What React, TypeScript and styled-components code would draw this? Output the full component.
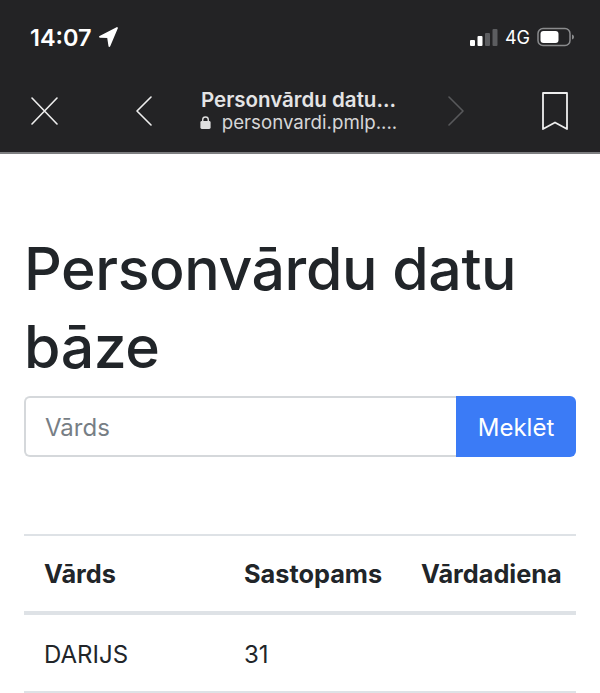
import React from "react";
import styled, { createGlobalStyle } from "styled-components";

const GlobalStyle = createGlobalStyle`
  html, body {
    margin: 0;
    padding: 0;
    height: 693px;
    overflow: hidden;
    background: #fff;
    font-family: Inter, "Liberation Sans", sans-serif;
    color: #212529;
  }
`;

const Page = styled.div`
  width: 600px;
  height: 693px;
  overflow: hidden;
`;

const BrowserBar = styled.header`
  height: 154px;
  box-sizing: border-box;
  background: #232325;
  border-bottom: 2px solid #7d7e80;
  display: flex;
  flex-direction: column;
  color: #fff;
`;

const StatusRow = styled.div`
  height: 74px;
  box-sizing: border-box;
  padding: 0 25px 0 30px;
  display: flex;
  align-items: center;
  justify-content: space-between;
`;

const Clock = styled.div`
  display: flex;
  align-items: center;
  gap: 7px;
  font-size: 23.5px;
  font-weight: 600;
`;

const StatusRight = styled.div`
  display: flex;
  align-items: center;
  gap: 7px;
  font-size: 18px;
  font-weight: 400;
`;

const NavRow = styled.div`
  flex: 1;
  padding: 0 32px 4px 31px;
  display: grid;
  grid-template-columns: 105px 64px 248px 94px 26px;
  align-items: center;
  justify-items: start;
`;

const PageInfo = styled.div`
  width: 197px;
  display: flex;
  flex-direction: column;
  align-items: center;
  line-height: 23px;
`;

const PageTitle = styled.div`
  font-size: 20.5px;
  font-weight: 600;
  color: #e4e4e5;
  white-space: nowrap;
`;

const PageUrl = styled.div`
  display: flex;
  align-items: center;
  gap: 11px;
  font-size: 18.7px;
  color: #d6d6d7;
  white-space: nowrap;
`;

const Content = styled.main`
  padding: 76px 24px 0;
`;

const Heading = styled.h1`
  margin: 0 0 10px;
  font-size: 59px;
  line-height: 78px;
  font-weight: 500;
  letter-spacing: -0.42px;
  color: #212529;
`;

const SearchForm = styled.form`
  display: flex;
  height: 61px;
  margin-bottom: 77px;
`;

const SearchInput = styled.input`
  flex: 1;
  min-width: 0;
  box-sizing: border-box;
  padding: 2px 19px 0;
  border: 2px solid #d5d8db;
  border-right: 0;
  border-radius: 6px 0 0 6px;
  font: 400 24px Inter, "Liberation Sans", sans-serif;
  color: #212529;
  outline: none;

  &::placeholder {
    color: #777e85;
    opacity: 1;
  }
`;

const SearchButton = styled.button`
  width: 120px;
  border: 0;
  border-radius: 0 6px 6px 0;
  background: #3b7bf6;
  color: #fff;
  font: 400 24px Inter, "Liberation Sans", sans-serif;
  padding: 2px 0 0;
`;

const Table = styled.table`
  width: 552px;
  table-layout: fixed;
  border-collapse: collapse;
  font-size: 24px;
`;

const HeadCell = styled.th<{ $width: number }>`
  width: ${(p) => p.$width}px;
  height: 78px;
  box-sizing: border-box;
  padding: 0 0 0 20px;
  text-align: left;
  font-size: 25.3px;
  font-weight: 700;
  white-space: nowrap;
  border-top: 2px solid #dee2e6;
  border-bottom: 4px solid #dee2e6;
`;

const Cell = styled.td`
  height: 79px;
  box-sizing: border-box;
  padding: 2px 0 0 20px;
  font-weight: 400;
  border-bottom: 2px solid #dee2e6;
`;

function LocationArrow() {
  return (
    <svg width="19" height="20" viewBox="0 0 19 20">
      <path d="M18 1 L1 9.8 L9 10.2 L10.4 19 Z" fill="#fff" stroke="#fff" strokeWidth="1.8" strokeLinejoin="round" />
    </svg>
  );
}

function SignalBars() {
  const bars = [
    { x: 0, h: 6, c: "#fff" },
    { x: 7.5, h: 10, c: "#fff" },
    { x: 15, h: 13, c: "#5c5d60" },
    { x: 22.5, h: 17, c: "#5c5d60" },
  ];
  return (
    <svg width="28" height="17" viewBox="0 0 28 17">
      {bars.map((b) => (
        <rect key={b.x} x={b.x} y={17 - b.h} width="5" height={b.h} rx="1" fill={b.c} />
      ))}
    </svg>
  );
}

function Battery() {
  return (
    <svg width="38" height="20" viewBox="0 0 38 20">
      <rect x="1" y="1.5" width="32" height="17" rx="5" fill="none" stroke="#8a8b8d" strokeWidth="1.5" />
      <rect x="3.5" y="4" width="18" height="12" rx="3" fill="#fff" />
      <path d="M35 7.5 C36.5 8 37 9 37 10 C37 11 36.5 12 35 12.5 Z" fill="#8a8b8d" />
    </svg>
  );
}

function CloseIcon() {
  return (
    <svg width="27" height="28" viewBox="0 0 27 28">
      <path d="M1 1 L26 27 M26 1 L1 27" stroke="#eeeeee" strokeWidth="1.6" fill="none" strokeLinecap="round" />
    </svg>
  );
}

function Chevron({ direction, color }: { direction: "left" | "right"; color: string }) {
  const d = direction === "left" ? "M15 1 L1 15 L15 29" : "M1 1 L15 15 L1 29";
  return (
    <svg width="16" height="30" viewBox="0 0 16 30">
      <path d={d} stroke={color} strokeWidth="1.6" fill="none" strokeLinecap="round" strokeLinejoin="round" />
    </svg>
  );
}

function LockIcon() {
  return (
    <svg width="11" height="13" viewBox="0 0 11 14">
      <path d="M2.5 6 V4 a3 3 0 0 1 6 0 V6" fill="none" stroke="#e0e0e0" strokeWidth="1.5" />
      <rect x="0" y="5.5" width="11" height="8.5" rx="1.5" fill="#e0e0e0" />
    </svg>
  );
}

function BookmarkIcon() {
  return (
    <svg width="26" height="38" viewBox="0 0 26 38">
      <path d="M1 1 H25 V37 L13 30.5 L1 37 Z" stroke="#eeeeee" strokeWidth="1.8" fill="none" strokeLinejoin="round" />
    </svg>
  );
}

export default function App() {
  return (
    <Page>
      <GlobalStyle />
      <BrowserBar>
        <StatusRow>
          <Clock>
            14:07
            <LocationArrow />
          </Clock>
          <StatusRight>
            <SignalBars />
            4G
            <Battery />
          </StatusRight>
        </StatusRow>
        <NavRow>
          <CloseIcon />
          <Chevron direction="left" color="#eeeeee" />
          <PageInfo>
            <PageTitle>Personvārdu datu...</PageTitle>
            <PageUrl>
              <LockIcon />
              personvardi.pmlp....
            </PageUrl>
          </PageInfo>
          <Chevron direction="right" color="#58595b" />
          <BookmarkIcon />
        </NavRow>
      </BrowserBar>
      <Content>
        <Heading>Personvārdu datu bāze</Heading>
        <SearchForm>
          <SearchInput placeholder="Vārds" />
          <SearchButton type="button">Meklēt</SearchButton>
        </SearchForm>
        <Table>
          <thead>
            <tr>
              <HeadCell $width={200}>Vārds</HeadCell>
              <HeadCell $width={177}>Sastopams</HeadCell>
              <HeadCell $width={175}>Vārdadiena</HeadCell>
            </tr>
          </thead>
          <tbody>
            <tr>
              <Cell>DARIJS</Cell>
              <Cell>31</Cell>
              <Cell />
            </tr>
          </tbody>
        </Table>
      </Content>
    </Page>
  );
}
